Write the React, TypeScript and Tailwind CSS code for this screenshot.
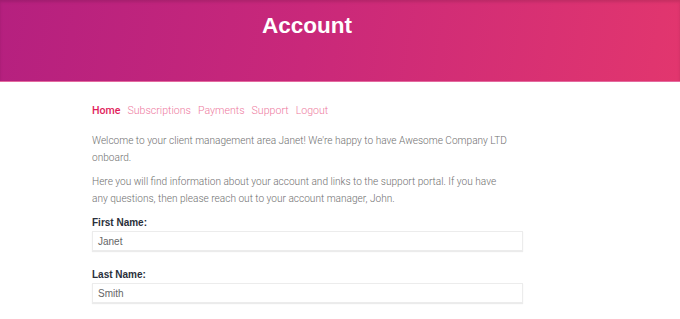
export default function App() {
  const links = ['Subscriptions', 'Payments', 'Support', 'Logout'];

  return (
    <div className="min-h-[319px] bg-white font-['Roboto',sans-serif]">
      <header className="h-[82px] border-b border-[#e46a9f] bg-[linear-gradient(100deg,#b5207f_0%,#c9287a_45%,#e2366e_100%)] shadow-[inset_0_2px_3px_rgba(0,0,0,0.12)]">
        <div className="mx-auto w-[431px] translate-x-[-33px] pt-[9px] text-center">
          <h1 className="font-['Liberation_Sans',Arial,sans-serif] text-[22.5px] font-bold leading-[34px] text-white">
            Account
          </h1>
        </div>
      </header>

      <main className="ml-[92px] w-[431px] pt-[20px]">
        <nav className="flex gap-[7px] text-[10.6px] leading-[17px]">
          <a className="font-medium text-[#e11d5c]">Home</a>
          {links.map((l) => (
            <a key={l} className="font-light text-[#ee7aa0]">
              {l}
            </a>
          ))}
        </nav>

        <p className="mt-[13px] w-[418px] text-[10.1px] font-light leading-[17px] text-[#6f6f6f]">
          Welcome to your client management area Janet! We're happy to have Awesome Company LTD onboard.
        </p>
        <p className="mt-[7px] w-[418px] text-[10.1px] font-light leading-[17px] text-[#6f6f6f]">
          Here you will find information about your account and links to the support portal. If you have any
          questions, then please reach out to your account manager, John.
        </p>

        <label className="mt-[8px] block font-['Liberation_Sans',Arial,sans-serif] text-[10px] font-bold leading-[16px] text-[#2a2f3a]">
          First Name:
        </label>
        <div className="flex h-[20px] items-center border border-[#ececec] px-[5px] font-['Liberation_Sans',Arial,sans-serif] text-[10px] text-[#666] shadow-[0_1px_1px_rgba(0,0,0,0.08)]">
          Janet
        </div>

        <label className="mt-[16px] block font-['Liberation_Sans',Arial,sans-serif] text-[10px] font-bold leading-[16px] text-[#2a2f3a]">
          Last Name:
        </label>
        <div className="flex h-[20px] items-center border border-[#ececec] px-[5px] font-['Liberation_Sans',Arial,sans-serif] text-[10px] text-[#666] shadow-[0_1px_1px_rgba(0,0,0,0.08)]">
          Smith
        </div>
      </main>
    </div>
  );
}
